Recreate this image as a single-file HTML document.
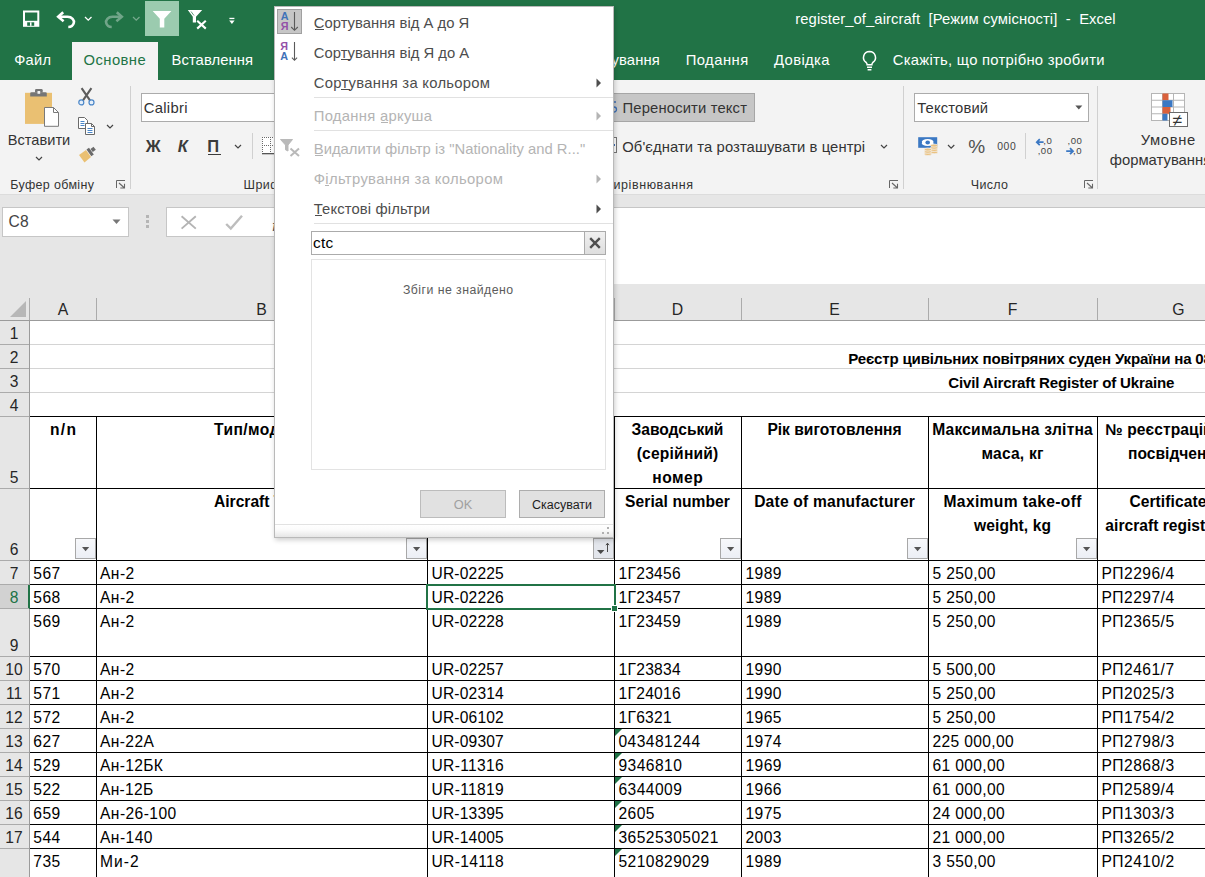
<!DOCTYPE html>
<html lang="uk"><head><meta charset="utf-8"><title>register_of_aircraft - Excel</title>
<style>
html,body{margin:0;padding:0;}
body{width:1205px;height:877px;overflow:hidden;position:relative;background:#e6e6e6;font-family:"Liberation Sans", sans-serif;}
#app{position:absolute;left:0;top:0;width:1205px;height:877px;overflow:hidden;}
#app div,#app svg,#app span.t{position:absolute;}
#app div{box-sizing:border-box;}
span.t{white-space:pre;}
</style></head><body><div id="app">
<div style="left:30px;top:321px;width:1175px;height:556px;background:#fff;"></div>
<div style="left:0px;top:195px;width:1205px;height:89px;background:#e6e6e6;"></div>
<div style="left:166px;top:207px;width:1039px;height:30px;background:#fff;border:1px solid #c6c6c6;border-right:none;"></div>
<div style="left:600px;top:207px;width:605px;height:78px;background:#fff;border-top:1px solid #c6c6c6;border-bottom:1px solid #c6c6c6;"></div>
<div style="left:2px;top:207px;width:127px;height:30px;background:#fff;border:1px solid #c6c6c6;"></div>
<span class="t" style="left:8.55px;top:212.40px;font-size:15.6px;line-height:20px;color:#444;letter-spacing:0.281px;">C8</span>
<svg style="left:112px;top:219px;" width="9" height="6" viewBox="0 0 9 6"><path d="M0.5 0.5h8l-4 4.5z" fill="#777"/></svg>
<div style="left:146px;top:215px;width:3px;height:3px;background:#b5b5b5;"></div>
<div style="left:146px;top:220px;width:3px;height:3px;background:#b5b5b5;"></div>
<div style="left:146px;top:225px;width:3px;height:3px;background:#b5b5b5;"></div>
<svg style="left:180px;top:215px;" width="17" height="16" viewBox="0 0 17 16"><path d="M1.6 1.2L15.8 13.6M15.8 1.2L1.6 13.6" stroke="#b4b4b4" stroke-width="1.9" fill="none"/></svg>
<svg style="left:225px;top:214px;" width="19" height="17" viewBox="0 0 19 17"><path d="M1.2 10L5.8 14.6L17 1.8" stroke="#bdbdbd" stroke-width="2.4" fill="none"/></svg>
<span class="t" style="left:272.20px;top:215.50px;font-size:15px;line-height:19px;color:#505050;font-style:italic;">fx</span>
<div style="left:0px;top:284px;width:1205px;height:37px;background:#e6e6e6;"></div>
<div style="left:0px;top:320px;width:1205px;height:1px;background:#9b9b9b;"></div>
<div style="left:0px;top:321px;width:30px;height:556px;background:#e6e6e6;"></div>
<div style="left:29px;top:321px;width:1px;height:556px;background:#9b9b9b;"></div>
<svg style="left:10px;top:301px;" width="16" height="16" viewBox="0 0 16 16"><path d="M16 0V16H0z" fill="#b7b7b7"/></svg>
<div style="left:29px;top:298px;width:1px;height:22px;background:#ababab;"></div>
<div style="left:96px;top:298px;width:1px;height:22px;background:#ababab;"></div>
<div style="left:427px;top:298px;width:1px;height:22px;background:#ababab;"></div>
<div style="left:614px;top:298px;width:1px;height:22px;background:#ababab;"></div>
<div style="left:741px;top:298px;width:1px;height:22px;background:#ababab;"></div>
<div style="left:928px;top:298px;width:1px;height:22px;background:#ababab;"></div>
<div style="left:1097px;top:298px;width:1px;height:22px;background:#ababab;"></div>
<span class="t" style="left:57.73px;top:299.70px;font-size:15.8px;line-height:20px;color:#262626;">A</span>
<span class="t" style="left:256.23px;top:299.70px;font-size:15.8px;line-height:20px;color:#262626;">B</span>
<span class="t" style="left:514.79px;top:299.70px;font-size:15.8px;line-height:20px;color:#262626;">C</span>
<span class="t" style="left:671.79px;top:299.70px;font-size:15.8px;line-height:20px;color:#262626;">D</span>
<span class="t" style="left:829.23px;top:299.70px;font-size:15.8px;line-height:20px;color:#262626;">E</span>
<span class="t" style="left:1007.67px;top:299.70px;font-size:15.8px;line-height:20px;color:#262626;">F</span>
<span class="t" style="left:1172.35px;top:299.70px;font-size:15.8px;line-height:20px;color:#262626;">G</span>
<div style="left:0px;top:585px;width:29px;height:24px;background:#d2d2d2;"></div>
<div style="left:28px;top:585px;width:2px;height:24px;background:#217346;"></div>
<div style="left:0px;top:344px;width:29px;height:1px;background:#ababab;"></div>
<span class="t" style="left:9.66px;top:323.90px;font-size:15.6px;line-height:20px;color:#262626;">1</span>
<div style="left:0px;top:368px;width:29px;height:1px;background:#ababab;"></div>
<span class="t" style="left:9.66px;top:347.90px;font-size:15.6px;line-height:20px;color:#262626;">2</span>
<div style="left:0px;top:392px;width:29px;height:1px;background:#ababab;"></div>
<span class="t" style="left:9.66px;top:371.90px;font-size:15.6px;line-height:20px;color:#262626;">3</span>
<div style="left:0px;top:416px;width:29px;height:1px;background:#ababab;"></div>
<span class="t" style="left:9.66px;top:395.90px;font-size:15.6px;line-height:20px;color:#262626;">4</span>
<div style="left:0px;top:488px;width:29px;height:1px;background:#ababab;"></div>
<span class="t" style="left:9.66px;top:467.90px;font-size:15.6px;line-height:20px;color:#262626;">5</span>
<div style="left:0px;top:560px;width:29px;height:1px;background:#ababab;"></div>
<span class="t" style="left:9.66px;top:539.90px;font-size:15.6px;line-height:20px;color:#262626;">6</span>
<div style="left:0px;top:584px;width:29px;height:1px;background:#ababab;"></div>
<span class="t" style="left:9.66px;top:563.90px;font-size:15.6px;line-height:20px;color:#262626;">7</span>
<div style="left:0px;top:608px;width:29px;height:1px;background:#ababab;"></div>
<span class="t" style="left:9.66px;top:587.90px;font-size:15.6px;line-height:20px;color:#217346;">8</span>
<div style="left:0px;top:656px;width:29px;height:1px;background:#ababab;"></div>
<span class="t" style="left:9.66px;top:635.90px;font-size:15.6px;line-height:20px;color:#262626;">9</span>
<div style="left:0px;top:680px;width:29px;height:1px;background:#ababab;"></div>
<span class="t" style="left:5.32px;top:659.90px;font-size:15.6px;line-height:20px;color:#262626;">10</span>
<div style="left:0px;top:704px;width:29px;height:1px;background:#ababab;"></div>
<span class="t" style="left:5.91px;top:683.90px;font-size:15.6px;line-height:20px;color:#262626;">11</span>
<div style="left:0px;top:728px;width:29px;height:1px;background:#ababab;"></div>
<span class="t" style="left:5.32px;top:707.90px;font-size:15.6px;line-height:20px;color:#262626;">12</span>
<div style="left:0px;top:752px;width:29px;height:1px;background:#ababab;"></div>
<span class="t" style="left:5.32px;top:731.90px;font-size:15.6px;line-height:20px;color:#262626;">13</span>
<div style="left:0px;top:776px;width:29px;height:1px;background:#ababab;"></div>
<span class="t" style="left:5.32px;top:755.90px;font-size:15.6px;line-height:20px;color:#262626;">14</span>
<div style="left:0px;top:800px;width:29px;height:1px;background:#ababab;"></div>
<span class="t" style="left:5.32px;top:779.90px;font-size:15.6px;line-height:20px;color:#262626;">15</span>
<div style="left:0px;top:824px;width:29px;height:1px;background:#ababab;"></div>
<span class="t" style="left:5.32px;top:803.90px;font-size:15.6px;line-height:20px;color:#262626;">16</span>
<div style="left:0px;top:848px;width:29px;height:1px;background:#ababab;"></div>
<span class="t" style="left:5.32px;top:827.90px;font-size:15.6px;line-height:20px;color:#262626;">17</span>
<div style="left:0px;top:896px;width:29px;height:1px;background:#ababab;"></div>
<div style="left:30px;top:344px;width:1175px;height:1px;background:#d4d4d4;"></div>
<div style="left:30px;top:368px;width:1175px;height:1px;background:#d4d4d4;"></div>
<div style="left:30px;top:392px;width:1175px;height:1px;background:#d4d4d4;"></div>
<div style="left:30px;top:416px;width:1175px;height:1px;background:#000;"></div>
<div style="left:30px;top:488px;width:1175px;height:1px;background:#000;"></div>
<div style="left:30px;top:560px;width:1175px;height:1px;background:#000;"></div>
<div style="left:30px;top:584px;width:1175px;height:1px;background:#000;"></div>
<div style="left:30px;top:608px;width:1175px;height:1px;background:#000;"></div>
<div style="left:30px;top:656px;width:1175px;height:1px;background:#000;"></div>
<div style="left:30px;top:680px;width:1175px;height:1px;background:#000;"></div>
<div style="left:30px;top:704px;width:1175px;height:1px;background:#000;"></div>
<div style="left:30px;top:728px;width:1175px;height:1px;background:#000;"></div>
<div style="left:30px;top:752px;width:1175px;height:1px;background:#000;"></div>
<div style="left:30px;top:776px;width:1175px;height:1px;background:#000;"></div>
<div style="left:30px;top:800px;width:1175px;height:1px;background:#000;"></div>
<div style="left:30px;top:824px;width:1175px;height:1px;background:#000;"></div>
<div style="left:30px;top:848px;width:1175px;height:1px;background:#000;"></div>
<div style="left:30px;top:896px;width:1175px;height:1px;background:#000;"></div>
<div style="left:96px;top:416px;width:1px;height:461px;background:#000;"></div>
<div style="left:427px;top:416px;width:1px;height:461px;background:#000;"></div>
<div style="left:614px;top:416px;width:1px;height:461px;background:#000;"></div>
<div style="left:741px;top:416px;width:1px;height:461px;background:#000;"></div>
<div style="left:928px;top:416px;width:1px;height:461px;background:#000;"></div>
<div style="left:1097px;top:416px;width:1px;height:461px;background:#000;"></div>
<span class="t" style="left:848.25px;top:348.50px;font-size:15.1px;line-height:19px;color:#000;font-weight:700;letter-spacing:-0.192px;">Реєстр цивільних повітряних суден України на 08</span>
<span class="t" style="left:948.25px;top:372.50px;font-size:15.1px;line-height:19px;color:#000;font-weight:700;letter-spacing:-0.17px;">Civil Aircraft Register of Ukraine</span>
<span class="t" style="left:50.08px;top:419.50px;font-size:15.6px;line-height:20px;color:#000;font-weight:700;letter-spacing:1.221px;">n/n</span>
<span class="t" style="left:214.06px;top:419.50px;font-size:15.6px;line-height:20px;color:#000;font-weight:700;letter-spacing:0.433px;">Тип/модель</span>
<span class="t" style="left:214.04px;top:491.50px;font-size:15.6px;line-height:20px;color:#000;font-weight:700;letter-spacing:-0.011px;">Aircraft Type</span>
<span class="t" style="left:631.58px;top:419.50px;font-size:15.6px;line-height:20px;color:#000;font-weight:700;letter-spacing:-0.026px;">Заводський</span>
<span class="t" style="left:636.71px;top:443.50px;font-size:15.6px;line-height:20px;color:#000;font-weight:700;letter-spacing:0.199px;">(серійний)</span>
<span class="t" style="left:652.23px;top:467.50px;font-size:15.6px;line-height:20px;color:#000;font-weight:700;letter-spacing:0.514px;">номер</span>
<span class="t" style="left:767.38px;top:419.50px;font-size:15.6px;line-height:20px;color:#000;font-weight:700;letter-spacing:0.008px;">Рік виготовлення</span>
<span class="t" style="left:932.20px;top:419.50px;font-size:15.6px;line-height:20px;color:#000;font-weight:700;letter-spacing:0.203px;">Максимальна злітна</span>
<span class="t" style="left:981.53px;top:443.50px;font-size:15.6px;line-height:20px;color:#000;font-weight:700;letter-spacing:0.203px;">маса, кг</span>
<span class="t" style="left:1105.27px;top:419.50px;font-size:15.6px;line-height:20px;color:#000;font-weight:700;letter-spacing:0.077px;">№ реєстраційного</span>
<span class="t" style="left:1128.02px;top:443.50px;font-size:15.6px;line-height:20px;color:#000;font-weight:700;letter-spacing:0.006px;">посвідчення</span>
<span class="t" style="left:625.11px;top:491.50px;font-size:15.6px;line-height:20px;color:#000;font-weight:700;letter-spacing:0.065px;">Serial number</span>
<span class="t" style="left:754.16px;top:491.50px;font-size:15.6px;line-height:20px;color:#000;font-weight:700;letter-spacing:0.202px;">Date of manufacturer</span>
<span class="t" style="left:943.53px;top:491.50px;font-size:15.6px;line-height:20px;color:#000;font-weight:700;letter-spacing:0.358px;">Maximum take-off</span>
<span class="t" style="left:974.08px;top:515.50px;font-size:15.6px;line-height:20px;color:#000;font-weight:700;letter-spacing:0.065px;">weight, kg</span>
<span class="t" style="left:1129.45px;top:491.50px;font-size:15.6px;line-height:20px;color:#000;font-weight:700;letter-spacing:0.06px;">Certificate of</span>
<span class="t" style="left:1105.35px;top:515.50px;font-size:15.6px;line-height:20px;color:#000;font-weight:700;letter-spacing:0.015px;">aircraft registration</span>
<div style="left:75px;top:538px;width:21px;height:21px;background:linear-gradient(#f7f8fb,#eceff5);border:1px solid #a8a8a8;"></div>
<svg style="left:75px;top:538px;" width="21" height="21" viewBox="0 0 21 21"><path d="M7 9h7.2l-3.6 4.2z" fill="#555"/></svg>
<div style="left:406px;top:538px;width:21px;height:21px;background:linear-gradient(#f7f8fb,#eceff5);border:1px solid #a8a8a8;"></div>
<svg style="left:406px;top:538px;" width="21" height="21" viewBox="0 0 21 21"><path d="M7 9h7.2l-3.6 4.2z" fill="#555"/></svg>
<div style="left:720px;top:538px;width:21px;height:21px;background:linear-gradient(#f7f8fb,#eceff5);border:1px solid #a8a8a8;"></div>
<svg style="left:720px;top:538px;" width="21" height="21" viewBox="0 0 21 21"><path d="M7 9h7.2l-3.6 4.2z" fill="#555"/></svg>
<div style="left:907px;top:538px;width:21px;height:21px;background:linear-gradient(#f7f8fb,#eceff5);border:1px solid #a8a8a8;"></div>
<svg style="left:907px;top:538px;" width="21" height="21" viewBox="0 0 21 21"><path d="M7 9h7.2l-3.6 4.2z" fill="#555"/></svg>
<div style="left:1076px;top:538px;width:21px;height:21px;background:linear-gradient(#f7f8fb,#eceff5);border:1px solid #a8a8a8;"></div>
<svg style="left:1076px;top:538px;" width="21" height="21" viewBox="0 0 21 21"><path d="M7 9h7.2l-3.6 4.2z" fill="#555"/></svg>
<div style="left:593px;top:538px;width:21px;height:21px;background:#e3e6ec;border:1px solid #a8a8a8;"></div>
<svg style="left:593px;top:538px;" width="21" height="21" viewBox="0 0 21 21"><path d="M4 12h7.4l-3.7 4z" fill="#4a4a4a"/><path d="M14.5 14V5.2M12.9 7.2l1.6-2l1.6 2" stroke="#4a4a4a" stroke-width="1" fill="none"/></svg>
<span class="t" style="left:33.30px;top:563.60px;font-size:15.6px;line-height:20px;color:#000;letter-spacing:0.446px;">567</span>
<span class="t" style="left:100.00px;top:563.60px;font-size:15.6px;line-height:20px;color:#000;letter-spacing:0.446px;">Ан-2</span>
<span class="t" style="left:431.50px;top:563.60px;font-size:15.6px;line-height:20px;color:#000;letter-spacing:0.171px;">UR-02225</span>
<span class="t" style="left:618.50px;top:563.60px;font-size:15.6px;line-height:20px;color:#000;letter-spacing:0.284px;">1Г23456</span>
<span class="t" style="left:745.50px;top:563.60px;font-size:15.6px;line-height:20px;color:#000;letter-spacing:0.448px;">1989</span>
<span class="t" style="left:932.50px;top:563.60px;font-size:15.6px;line-height:20px;color:#000;letter-spacing:0.325px;">5 250,00</span>
<span class="t" style="left:1101.50px;top:563.60px;font-size:15.6px;line-height:20px;color:#000;letter-spacing:0.468px;">РП2296/4</span>
<span class="t" style="left:33.30px;top:587.60px;font-size:15.6px;line-height:20px;color:#000;letter-spacing:0.446px;">568</span>
<span class="t" style="left:100.00px;top:587.60px;font-size:15.6px;line-height:20px;color:#000;letter-spacing:0.446px;">Ан-2</span>
<span class="t" style="left:431.50px;top:587.60px;font-size:15.6px;line-height:20px;color:#000;letter-spacing:0.171px;">UR-02226</span>
<span class="t" style="left:618.50px;top:587.60px;font-size:15.6px;line-height:20px;color:#000;letter-spacing:0.284px;">1Г23457</span>
<span class="t" style="left:745.50px;top:587.60px;font-size:15.6px;line-height:20px;color:#000;letter-spacing:0.448px;">1989</span>
<span class="t" style="left:932.50px;top:587.60px;font-size:15.6px;line-height:20px;color:#000;letter-spacing:0.325px;">5 250,00</span>
<span class="t" style="left:1101.50px;top:587.60px;font-size:15.6px;line-height:20px;color:#000;letter-spacing:0.468px;">РП2297/4</span>
<span class="t" style="left:33.30px;top:611.60px;font-size:15.6px;line-height:20px;color:#000;letter-spacing:0.446px;">569</span>
<span class="t" style="left:100.00px;top:611.60px;font-size:15.6px;line-height:20px;color:#000;letter-spacing:0.446px;">Ан-2</span>
<span class="t" style="left:431.50px;top:611.60px;font-size:15.6px;line-height:20px;color:#000;letter-spacing:0.171px;">UR-02228</span>
<span class="t" style="left:618.50px;top:611.60px;font-size:15.6px;line-height:20px;color:#000;letter-spacing:0.284px;">1Г23459</span>
<span class="t" style="left:745.50px;top:611.60px;font-size:15.6px;line-height:20px;color:#000;letter-spacing:0.448px;">1989</span>
<span class="t" style="left:932.50px;top:611.60px;font-size:15.6px;line-height:20px;color:#000;letter-spacing:0.325px;">5 250,00</span>
<span class="t" style="left:1101.50px;top:611.60px;font-size:15.6px;line-height:20px;color:#000;letter-spacing:0.468px;">РП2365/5</span>
<span class="t" style="left:33.30px;top:659.60px;font-size:15.6px;line-height:20px;color:#000;letter-spacing:0.446px;">570</span>
<span class="t" style="left:100.00px;top:659.60px;font-size:15.6px;line-height:20px;color:#000;letter-spacing:0.446px;">Ан-2</span>
<span class="t" style="left:431.50px;top:659.60px;font-size:15.6px;line-height:20px;color:#000;letter-spacing:0.171px;">UR-02257</span>
<span class="t" style="left:618.50px;top:659.60px;font-size:15.6px;line-height:20px;color:#000;letter-spacing:0.284px;">1Г23834</span>
<span class="t" style="left:745.50px;top:659.60px;font-size:15.6px;line-height:20px;color:#000;letter-spacing:0.448px;">1990</span>
<span class="t" style="left:932.50px;top:659.60px;font-size:15.6px;line-height:20px;color:#000;letter-spacing:0.325px;">5 500,00</span>
<span class="t" style="left:1101.50px;top:659.60px;font-size:15.6px;line-height:20px;color:#000;letter-spacing:0.468px;">РП2461/7</span>
<span class="t" style="left:33.30px;top:683.60px;font-size:15.6px;line-height:20px;color:#000;letter-spacing:0.446px;">571</span>
<span class="t" style="left:100.00px;top:683.60px;font-size:15.6px;line-height:20px;color:#000;letter-spacing:0.446px;">Ан-2</span>
<span class="t" style="left:431.50px;top:683.60px;font-size:15.6px;line-height:20px;color:#000;letter-spacing:0.171px;">UR-02314</span>
<span class="t" style="left:618.50px;top:683.60px;font-size:15.6px;line-height:20px;color:#000;letter-spacing:0.284px;">1Г24016</span>
<span class="t" style="left:745.50px;top:683.60px;font-size:15.6px;line-height:20px;color:#000;letter-spacing:0.448px;">1990</span>
<span class="t" style="left:932.50px;top:683.60px;font-size:15.6px;line-height:20px;color:#000;letter-spacing:0.325px;">5 250,00</span>
<span class="t" style="left:1101.50px;top:683.60px;font-size:15.6px;line-height:20px;color:#000;letter-spacing:0.468px;">РП2025/3</span>
<span class="t" style="left:33.30px;top:707.60px;font-size:15.6px;line-height:20px;color:#000;letter-spacing:0.446px;">572</span>
<span class="t" style="left:100.00px;top:707.60px;font-size:15.6px;line-height:20px;color:#000;letter-spacing:0.446px;">Ан-2</span>
<span class="t" style="left:431.50px;top:707.60px;font-size:15.6px;line-height:20px;color:#000;letter-spacing:0.171px;">UR-06102</span>
<span class="t" style="left:618.50px;top:707.60px;font-size:15.6px;line-height:20px;color:#000;letter-spacing:0.257px;">1Г6321</span>
<span class="t" style="left:745.50px;top:707.60px;font-size:15.6px;line-height:20px;color:#000;letter-spacing:0.448px;">1965</span>
<span class="t" style="left:932.50px;top:707.60px;font-size:15.6px;line-height:20px;color:#000;letter-spacing:0.325px;">5 250,00</span>
<span class="t" style="left:1101.50px;top:707.60px;font-size:15.6px;line-height:20px;color:#000;letter-spacing:0.468px;">РП1754/2</span>
<span class="t" style="left:33.30px;top:731.60px;font-size:15.6px;line-height:20px;color:#000;letter-spacing:0.446px;">627</span>
<span class="t" style="left:100.00px;top:731.60px;font-size:15.6px;line-height:20px;color:#000;letter-spacing:0.377px;">Ан-22А</span>
<span class="t" style="left:431.50px;top:731.60px;font-size:15.6px;line-height:20px;color:#000;letter-spacing:0.171px;">UR-09307</span>
<span class="t" style="left:618.50px;top:731.60px;font-size:15.6px;line-height:20px;color:#000;letter-spacing:0.45px;">043481244</span>
<span class="t" style="left:745.50px;top:731.60px;font-size:15.6px;line-height:20px;color:#000;letter-spacing:0.448px;">1974</span>
<span class="t" style="left:932.50px;top:731.60px;font-size:15.6px;line-height:20px;color:#000;letter-spacing:0.35px;">225 000,00</span>
<span class="t" style="left:1101.50px;top:731.60px;font-size:15.6px;line-height:20px;color:#000;letter-spacing:0.468px;">РП2798/3</span>
<svg style="left:615px;top:729px;" width="8" height="8" viewBox="0 0 8 8"><path d="M0 0H7L0 7z" fill="#1e7145"/></svg>
<span class="t" style="left:33.30px;top:755.60px;font-size:15.6px;line-height:20px;color:#000;letter-spacing:0.446px;">529</span>
<span class="t" style="left:100.00px;top:755.60px;font-size:15.6px;line-height:20px;color:#000;letter-spacing:0.339px;">Ан-12БК</span>
<span class="t" style="left:431.50px;top:755.60px;font-size:15.6px;line-height:20px;color:#000;letter-spacing:0.316px;">UR-11316</span>
<span class="t" style="left:618.50px;top:755.60px;font-size:15.6px;line-height:20px;color:#000;letter-spacing:0.449px;">9346810</span>
<span class="t" style="left:745.50px;top:755.60px;font-size:15.6px;line-height:20px;color:#000;letter-spacing:0.448px;">1969</span>
<span class="t" style="left:932.50px;top:755.60px;font-size:15.6px;line-height:20px;color:#000;letter-spacing:0.339px;">61 000,00</span>
<span class="t" style="left:1101.50px;top:755.60px;font-size:15.6px;line-height:20px;color:#000;letter-spacing:0.468px;">РП2868/3</span>
<svg style="left:615px;top:753px;" width="8" height="8" viewBox="0 0 8 8"><path d="M0 0H7L0 7z" fill="#1e7145"/></svg>
<span class="t" style="left:33.30px;top:779.60px;font-size:15.6px;line-height:20px;color:#000;letter-spacing:0.446px;">522</span>
<span class="t" style="left:100.00px;top:779.60px;font-size:15.6px;line-height:20px;color:#000;letter-spacing:0.279px;">Ан-12Б</span>
<span class="t" style="left:431.50px;top:779.60px;font-size:15.6px;line-height:20px;color:#000;letter-spacing:0.316px;">UR-11819</span>
<span class="t" style="left:618.50px;top:779.60px;font-size:15.6px;line-height:20px;color:#000;letter-spacing:0.449px;">6344009</span>
<span class="t" style="left:745.50px;top:779.60px;font-size:15.6px;line-height:20px;color:#000;letter-spacing:0.448px;">1966</span>
<span class="t" style="left:932.50px;top:779.60px;font-size:15.6px;line-height:20px;color:#000;letter-spacing:0.339px;">61 000,00</span>
<span class="t" style="left:1101.50px;top:779.60px;font-size:15.6px;line-height:20px;color:#000;letter-spacing:0.468px;">РП2589/4</span>
<svg style="left:615px;top:777px;" width="8" height="8" viewBox="0 0 8 8"><path d="M0 0H7L0 7z" fill="#1e7145"/></svg>
<span class="t" style="left:33.30px;top:803.60px;font-size:15.6px;line-height:20px;color:#000;letter-spacing:0.446px;">659</span>
<span class="t" style="left:100.00px;top:803.60px;font-size:15.6px;line-height:20px;color:#000;letter-spacing:0.435px;">Ан-26-100</span>
<span class="t" style="left:431.50px;top:803.60px;font-size:15.6px;line-height:20px;color:#000;letter-spacing:0.171px;">UR-13395</span>
<span class="t" style="left:618.50px;top:803.60px;font-size:15.6px;line-height:20px;color:#000;letter-spacing:0.448px;">2605</span>
<span class="t" style="left:745.50px;top:803.60px;font-size:15.6px;line-height:20px;color:#000;letter-spacing:0.448px;">1975</span>
<span class="t" style="left:932.50px;top:803.60px;font-size:15.6px;line-height:20px;color:#000;letter-spacing:0.339px;">24 000,00</span>
<span class="t" style="left:1101.50px;top:803.60px;font-size:15.6px;line-height:20px;color:#000;letter-spacing:0.468px;">РП1303/3</span>
<svg style="left:615px;top:801px;" width="8" height="8" viewBox="0 0 8 8"><path d="M0 0H7L0 7z" fill="#1e7145"/></svg>
<span class="t" style="left:33.30px;top:827.60px;font-size:15.6px;line-height:20px;color:#000;letter-spacing:0.446px;">544</span>
<span class="t" style="left:100.00px;top:827.60px;font-size:15.6px;line-height:20px;color:#000;letter-spacing:0.448px;">Ан-140</span>
<span class="t" style="left:431.50px;top:827.60px;font-size:15.6px;line-height:20px;color:#000;letter-spacing:0.171px;">UR-14005</span>
<span class="t" style="left:618.50px;top:827.60px;font-size:15.6px;line-height:20px;color:#000;letter-spacing:0.45px;">36525305021</span>
<span class="t" style="left:745.50px;top:827.60px;font-size:15.6px;line-height:20px;color:#000;letter-spacing:0.448px;">2003</span>
<span class="t" style="left:932.50px;top:827.60px;font-size:15.6px;line-height:20px;color:#000;letter-spacing:0.339px;">21 000,00</span>
<span class="t" style="left:1101.50px;top:827.60px;font-size:15.6px;line-height:20px;color:#000;letter-spacing:0.468px;">РП3265/2</span>
<svg style="left:615px;top:825px;" width="8" height="8" viewBox="0 0 8 8"><path d="M0 0H7L0 7z" fill="#1e7145"/></svg>
<span class="t" style="left:33.30px;top:851.60px;font-size:15.6px;line-height:20px;color:#000;letter-spacing:0.446px;">735</span>
<span class="t" style="left:100.00px;top:851.60px;font-size:15.6px;line-height:20px;color:#000;letter-spacing:1.044px;">Ми-2</span>
<span class="t" style="left:431.50px;top:851.60px;font-size:15.6px;line-height:20px;color:#000;letter-spacing:0.316px;">UR-14118</span>
<span class="t" style="left:618.50px;top:851.60px;font-size:15.6px;line-height:20px;color:#000;letter-spacing:0.45px;">5210829029</span>
<span class="t" style="left:745.50px;top:851.60px;font-size:15.6px;line-height:20px;color:#000;letter-spacing:0.448px;">1989</span>
<span class="t" style="left:932.50px;top:851.60px;font-size:15.6px;line-height:20px;color:#000;letter-spacing:0.325px;">3 550,00</span>
<span class="t" style="left:1101.50px;top:851.60px;font-size:15.6px;line-height:20px;color:#000;letter-spacing:0.468px;">РП2410/2</span>
<svg style="left:615px;top:849px;" width="8" height="8" viewBox="0 0 8 8"><path d="M0 0H7L0 7z" fill="#1e7145"/></svg>
<div style="left:426px;top:584px;width:190px;height:26px;background:transparent;border:2px solid #217346;"></div>
<div style="left:611px;top:605px;width:7px;height:7px;background:#217346;border:1px solid #fff;"></div>
<div style="left:0px;top:0px;width:1205px;height:80px;background:#217346;"></div>
<div style="left:0px;top:80px;width:1205px;height:115px;background:#f3f3f3;"></div>
<div style="left:0px;top:194px;width:1205px;height:1px;background:#dcdcdc;"></div>
<div style="left:72px;top:42px;width:86px;height:38px;background:#f3f3f3;"></div>
<svg style="left:23px;top:10px;" width="17" height="17" viewBox="0 0 17 17"><rect x="0" y="0.5" width="16.3" height="16.3" fill="#fff"/><rect x="2" y="2.5" width="12.3" height="8.3" fill="#217346"/><rect x="4.2" y="12.3" width="7" height="3.5" fill="#217346"/><rect x="7" y="12.3" width="1.5" height="3.5" fill="#fff"/></svg>
<svg style="left:56px;top:10px;" width="21" height="19" viewBox="0 0 21 19"><path d="M2.2 6.8H11.5C16 6.8 18.6 10 17.8 13C17.1 15.6 15 17 12.3 17" stroke="#fff" stroke-width="2.6" fill="none"/><path d="M7.2 2.2L2.2 6.8L7.6 11.2" stroke="#fff" stroke-width="2.6" fill="none"/></svg>
<svg style="left:84px;top:16px;" width="8.5" height="6.2" viewBox="0 0 8.5 6.2"><path d="M1 1L4.25 4.2L7.5 1" stroke="#fff" stroke-width="1.3" fill="none"/></svg>
<svg style="left:103px;top:10px;" width="21" height="19" viewBox="0 0 21 19"><g opacity="0.36"><path d="M18.8 6.8H9.5C5 6.8 2.4 10 3.2 13C3.9 15.6 6 17 8.7 17" stroke="#fff" stroke-width="2.6" fill="none"/><path d="M13.8 2.2L18.8 6.8L13.4 11.2" stroke="#fff" stroke-width="2.6" fill="none"/></g></svg>
<svg style="left:132px;top:16px;" width="8.5" height="6.2" viewBox="0 0 8.5 6.2"><path d="M1 1L4.25 4.2L7.5 1" stroke="rgba(255,255,255,0.38)" stroke-width="1.3" fill="none"/></svg>
<div style="left:145px;top:1px;width:34px;height:35px;background:#9bcbaf;"></div>
<svg style="left:152px;top:11px;" width="20" height="17" viewBox="0 0 20 17"><path d="M0.7 0H19.4L12.3 7.8V16.5H7.8V7.8z" fill="#fff"/></svg>
<svg style="left:186px;top:9px;" width="23" height="21" viewBox="0 0 23 21"><path d="M1.8 1H16.2L10 7.8V13.6H6.8V7.8z" fill="#fff"/><path d="M5 2.5L8 6.5" stroke="#217346" stroke-width="0.7"/><path d="M11.2 11.8L19.8 19.6M19.8 11.8L11.2 19.6" stroke="#fff" stroke-width="2.1"/></svg>
<svg style="left:229px;top:17px;" width="8" height="8" viewBox="0 0 8 8"><rect x="0.4" y="0.8" width="5" height="1.3" fill="#fff"/><path d="M0.2 3.6H5.6L2.9 6.9z" fill="#fff"/></svg>
<span class="t" style="left:795.25px;top:10.00px;font-size:14.8px;line-height:18px;color:#fff;letter-spacing:0.081px;">register_of_aircraft  [Режим сумісності]  -  Excel</span>
<span class="t" style="left:14.25px;top:51.30px;font-size:14.6px;line-height:18px;color:#fff;letter-spacing:0.277px;">Файл</span>
<span class="t" style="left:83.55px;top:51.30px;font-size:14.8px;line-height:18px;color:#217346;letter-spacing:0.417px;">Основне</span>
<span class="t" style="left:171.55px;top:51.30px;font-size:14.8px;line-height:18px;color:#fff;letter-spacing:0.064px;">Вставлення</span>
<span class="t" style="left:573.25px;top:51.30px;font-size:14.8px;line-height:18px;color:#fff;letter-spacing:0.077px;">Формування</span>
<span class="t" style="left:685.65px;top:51.30px;font-size:14.8px;line-height:18px;color:#fff;letter-spacing:0.462px;">Подання</span>
<span class="t" style="left:773.95px;top:51.30px;font-size:14.8px;line-height:18px;color:#fff;letter-spacing:0.395px;">Довідка</span>
<span class="t" style="left:892.75px;top:51.30px;font-size:14.8px;line-height:18px;color:#fff;letter-spacing:0.279px;">Скажіть, що потрібно зробити</span>
<svg style="left:861px;top:50px;" width="17" height="22" viewBox="0 0 17 22"><path d="M8.5 1.5a6 6 0 0 0 -3.3 11c0.6 0.6 0.9 1.4 0.9 2.3h4.8c0-0.9 0.3-1.7 0.9-2.3a6 6 0 0 0 -3.3-11z" fill="none" stroke="#fff" stroke-width="1.5"/><path d="M6 17.3h5M6.6 19.8h3.8" stroke="#fff" stroke-width="1.4"/></svg>
<svg style="left:24px;top:88px;" width="37" height="40" viewBox="0 0 37 40"><rect x="1" y="4.8" width="27" height="31.1" fill="#eac072"/><path d="M6.2 8.4V5.6Q6.2 4.3 7.5 4.3H21.5Q22.8 4.3 22.8 5.6V8.4z" fill="#767676"/><path d="M11 4.5V2.2Q11 1 12.2 1H17.5Q18.7 1 18.7 2.2V4.5z" fill="#767676"/><rect x="13.5" y="3" width="2.7" height="2.8" fill="#f3f3f3"/><path d="M20.5 19.5H29.5L34.5 24.5V38.3H20.5z" fill="#fff" stroke="#7a7a7a" stroke-width="1"/><path d="M29.5 19.5V24.5H34.5" fill="none" stroke="#7a7a7a" stroke-width="1"/></svg>
<span class="t" style="left:7.75px;top:130.50px;font-size:14.6px;line-height:18px;color:#333333;letter-spacing:0.01px;">Вставити</span>
<svg style="left:35px;top:156px;" width="8" height="6" viewBox="0 0 8 6"><path d="M1 1L4.0 4L7 1" stroke="#444" stroke-width="1.2" fill="none"/></svg>
<svg style="left:77px;top:87px;" width="19" height="20" viewBox="0 0 19 20"><path d="M4.6 1.2L13 13.4M14.4 1.2L6 13.4" stroke="#5c5c5c" stroke-width="2.1" fill="none"/><circle cx="4.3" cy="15.4" r="2.5" fill="#e4eef9" stroke="#4a86c8" stroke-width="1.2"/><circle cx="14.5" cy="15.4" r="2.5" fill="#e4eef9" stroke="#4a86c8" stroke-width="1.2"/></svg>
<svg style="left:77px;top:116px;" width="19" height="20" viewBox="0 0 19 20"><path d="M1.5 1.5H7.5L10.5 4.5V12.5H1.5z" fill="#fff" stroke="#6a6a6a"/><path d="M3.5 5.5h4M3.5 7.5h4M3.5 9.5h4" stroke="#4a86c8" stroke-width="1"/><path d="M8.5 7.5H14.5L17.5 10.5V18.5H8.5z" fill="#fff" stroke="#6a6a6a"/><path d="M14.5 7.5V10.5H17.5" fill="none" stroke="#6a6a6a"/><path d="M10.5 12.5h5M10.5 14.5h5M10.5 16.5h5" stroke="#4a86c8" stroke-width="1"/></svg>
<svg style="left:106px;top:124px;" width="8" height="6" viewBox="0 0 8 6"><path d="M1 1L4.0 4L7 1" stroke="#444" stroke-width="1.2" fill="none"/></svg>
<svg style="left:78px;top:146px;" width="19" height="18" viewBox="0 0 19 18"><path d="M1 9L8 4L13 11L6.5 16.5z" fill="#eac072"/><path d="M8.5 3.5L11 1.8L15.8 8.5L13.3 10.3z" fill="#6a6a6a"/><path d="M12.5 3L15.5 0.8L17.8 3.8L14.8 6z" fill="#6a6a6a"/></svg>
<span class="t" style="left:10.25px;top:176.60px;font-size:12.5px;line-height:16px;color:#333333;letter-spacing:0.328px;">Буфер обміну</span>
<svg style="left:116px;top:180px;" width="10" height="9" viewBox="0 0 10 9"><path d="M0.5 8V0.5H9" stroke="#666" stroke-width="1" fill="none"/><path d="M3 3L8.5 8M8.5 3.8V8H4.3" stroke="#666" stroke-width="1.1" fill="none"/></svg>
<div style="left:130px;top:86px;width:1px;height:103px;background:#d0d0d0;"></div>
<div style="left:141px;top:93px;width:150px;height:29px;background:#fff;border:1px solid #ababab;"></div>
<span class="t" style="left:143.75px;top:98.80px;font-size:14.8px;line-height:18px;color:#333333;letter-spacing:0.295px;">Calibri</span>
<span class="t" style="left:145.75px;top:135.90px;font-size:16.5px;line-height:21px;color:#3b3b3b;font-weight:700;letter-spacing:3.578px;">Ж</span>
<span class="t" style="left:177.75px;top:135.90px;font-size:16.5px;line-height:21px;color:#3b3b3b;font-weight:700;font-style:italic;letter-spacing:3.344px;">К</span>
<span class="t" style="left:207.25px;top:135.90px;font-size:16.5px;line-height:21px;color:#3b3b3b;font-weight:700;letter-spacing:2.141px;">П</span>
<div style="left:208px;top:153.5px;width:13px;height:1.2px;background:#3b3b3b;"></div>
<svg style="left:234px;top:144px;" width="8" height="6" viewBox="0 0 8 6"><path d="M1 1L4.0 4L7 1" stroke="#444" stroke-width="1.2" fill="none"/></svg>
<div style="left:252px;top:133px;width:1px;height:26px;background:#d0d0d0;"></div>
<svg style="left:262px;top:137px;" width="18" height="18" viewBox="0 0 18 18"><rect x="0" y="0" width="17" height="16" fill="#fff"/><rect x="0" y="0" width="1" height="1" fill="#6a6a6a"/><rect x="0" y="8" width="1" height="1" fill="#6a6a6a"/><rect x="2" y="0" width="1" height="1" fill="#6a6a6a"/><rect x="2" y="8" width="1" height="1" fill="#6a6a6a"/><rect x="4" y="0" width="1" height="1" fill="#6a6a6a"/><rect x="4" y="8" width="1" height="1" fill="#6a6a6a"/><rect x="6" y="0" width="1" height="1" fill="#6a6a6a"/><rect x="6" y="8" width="1" height="1" fill="#6a6a6a"/><rect x="8" y="0" width="1" height="1" fill="#6a6a6a"/><rect x="8" y="8" width="1" height="1" fill="#6a6a6a"/><rect x="10" y="0" width="1" height="1" fill="#6a6a6a"/><rect x="10" y="8" width="1" height="1" fill="#6a6a6a"/><rect x="12" y="0" width="1" height="1" fill="#6a6a6a"/><rect x="12" y="8" width="1" height="1" fill="#6a6a6a"/><rect x="14" y="0" width="1" height="1" fill="#6a6a6a"/><rect x="14" y="8" width="1" height="1" fill="#6a6a6a"/><rect x="16" y="0" width="1" height="1" fill="#6a6a6a"/><rect x="16" y="8" width="1" height="1" fill="#6a6a6a"/><rect x="0" y="2" width="1" height="1" fill="#6a6a6a"/><rect x="8" y="2" width="1" height="1" fill="#6a6a6a"/><rect x="16" y="2" width="1" height="1" fill="#6a6a6a"/><rect x="0" y="4" width="1" height="1" fill="#6a6a6a"/><rect x="8" y="4" width="1" height="1" fill="#6a6a6a"/><rect x="16" y="4" width="1" height="1" fill="#6a6a6a"/><rect x="0" y="6" width="1" height="1" fill="#6a6a6a"/><rect x="8" y="6" width="1" height="1" fill="#6a6a6a"/><rect x="16" y="6" width="1" height="1" fill="#6a6a6a"/><rect x="0" y="8" width="1" height="1" fill="#6a6a6a"/><rect x="8" y="8" width="1" height="1" fill="#6a6a6a"/><rect x="16" y="8" width="1" height="1" fill="#6a6a6a"/><rect x="0" y="10" width="1" height="1" fill="#6a6a6a"/><rect x="8" y="10" width="1" height="1" fill="#6a6a6a"/><rect x="16" y="10" width="1" height="1" fill="#6a6a6a"/><rect x="0" y="12" width="1" height="1" fill="#6a6a6a"/><rect x="8" y="12" width="1" height="1" fill="#6a6a6a"/><rect x="16" y="12" width="1" height="1" fill="#6a6a6a"/><rect x="0" y="14" width="1" height="1" fill="#6a6a6a"/><rect x="8" y="14" width="1" height="1" fill="#6a6a6a"/><rect x="16" y="14" width="1" height="1" fill="#6a6a6a"/><rect x="0" y="16" width="17" height="1.3" fill="#555"/></svg>
<span class="t" style="left:243.50px;top:176.60px;font-size:12.5px;line-height:16px;color:#333333;letter-spacing:0.45px;">Шрифт</span>
<div style="left:600px;top:93px;width:155px;height:29px;background:#c6c6c6;border:1px solid #a6a6a6;"></div>
<svg style="left:603px;top:99px;" width="16" height="16" viewBox="0 0 16 16"><path d="M2 3H13M2 8H11a2.5 2.5 0 0 1 0 5H8" stroke="#3c6eb4" stroke-width="1.3" fill="none"/></svg>
<span class="t" style="left:622.55px;top:98.70px;font-size:14.8px;line-height:18px;color:#333333;letter-spacing:0.144px;">Переносити текст</span>
<svg style="left:600px;top:135px;" width="18" height="20" viewBox="0 0 18 20"><rect x="1.5" y="2.5" width="15" height="15" fill="#fff" stroke="#777"/><path d="M11 10h4M13 8l2 2l-2 2" stroke="#3c6eb4" fill="none"/></svg>
<span class="t" style="left:622.25px;top:137.90px;font-size:14.8px;line-height:18px;color:#333333;letter-spacing:0.088px;">Об'єднати та розташувати в центрі</span>
<svg style="left:880px;top:144px;" width="8" height="6" viewBox="0 0 8 6"><path d="M1 1L4.0 4L7 1" stroke="#444" stroke-width="1.2" fill="none"/></svg>
<span class="t" style="left:604.55px;top:176.60px;font-size:12.5px;line-height:16px;color:#333333;letter-spacing:0.583px;">Вирівнювання</span>
<svg style="left:889px;top:180px;" width="10" height="9" viewBox="0 0 10 9"><path d="M0.5 8V0.5H9" stroke="#666" stroke-width="1" fill="none"/><path d="M3 3L8.5 8M8.5 3.8V8H4.3" stroke="#666" stroke-width="1.1" fill="none"/></svg>
<div style="left:903px;top:86px;width:1px;height:103px;background:#d0d0d0;"></div>
<div style="left:914px;top:93px;width:175px;height:29px;background:#fff;border:1px solid #ababab;"></div>
<span class="t" style="left:917.25px;top:98.80px;font-size:14.8px;line-height:18px;color:#333333;letter-spacing:0.142px;">Текстовий</span>
<svg style="left:1075px;top:105px;" width="8" height="5" viewBox="0 0 8 5"><path d="M0.3 0.5h7l-3.5 4z" fill="#555"/></svg>
<svg style="left:918px;top:137px;" width="21" height="19" viewBox="0 0 21 19"><rect x="0.2" y="0.2" width="19" height="10.6" fill="#3b78c3"/><ellipse cx="9.7" cy="5.5" rx="6.3" ry="3.6" fill="#fff"/><ellipse cx="9.7" cy="5.5" rx="2.3" ry="2.1" fill="#3b78c3"/><rect x="2" y="4.3" width="2" height="2.2" fill="#3b78c3"/><rect x="15.4" y="4.3" width="2" height="2.2" fill="#3b78c3"/><g fill="#eac282" stroke="#f3f3f3" stroke-width="0.7"><ellipse cx="16.2" cy="15.2" rx="3.6" ry="1.5"/><ellipse cx="16.2" cy="13.0" rx="3.6" ry="1.5"/><ellipse cx="16.2" cy="10.8" rx="3.6" ry="1.5"/><ellipse cx="16.2" cy="8.6" rx="3.6" ry="1.5"/><ellipse cx="9.9" cy="17.0" rx="3.6" ry="1.5"/><ellipse cx="9.9" cy="14.8" rx="3.6" ry="1.5"/><ellipse cx="9.9" cy="12.6" rx="3.6" ry="1.5"/></g></svg>
<svg style="left:947px;top:144px;" width="8.3" height="6.2" viewBox="0 0 8.3 6.2"><path d="M1 1L4.15 4.2L7.3 1" stroke="#444" stroke-width="1.2" fill="none"/></svg>
<span class="t" style="left:968.25px;top:134.60px;font-size:19px;line-height:24px;color:#505050;letter-spacing:0.594px;">%</span>
<span class="t" style="left:997.25px;top:139.70px;font-size:10.4px;line-height:13px;color:#444;letter-spacing:0.585px;">000</span>
<div style="left:1025px;top:133px;width:1px;height:26px;background:#d0d0d0;"></div>
<svg style="left:1035px;top:137px;" width="12" height="11" viewBox="0 0 12 11"><path d="M1.8 5.2H8.6M4.8 2.2L1.8 5.2L4.8 8.2" stroke="#3b78c3" stroke-width="1.8" fill="none"/></svg>
<span class="t" style="left:1043.25px;top:135.20px;font-size:9.6px;line-height:12px;color:#444;letter-spacing:0.542px;">,0</span>
<span class="t" style="left:1037.75px;top:144.60px;font-size:9.6px;line-height:12px;color:#444;letter-spacing:0.452px;">,00</span>
<svg style="left:1065px;top:146px;" width="12" height="11" viewBox="0 0 12 11"><path d="M1.2 5.2H8M5 2.2L8 5.2L5 8.2" stroke="#3b78c3" stroke-width="1.8" fill="none"/></svg>
<span class="t" style="left:1067.55px;top:135.20px;font-size:9.6px;line-height:12px;color:#444;letter-spacing:0.452px;">,00</span>
<span class="t" style="left:1073.05px;top:144.60px;font-size:9.6px;line-height:12px;color:#444;letter-spacing:0.542px;">,0</span>
<span class="t" style="left:970.75px;top:176.60px;font-size:12.5px;line-height:16px;color:#333333;letter-spacing:0.309px;">Число</span>
<svg style="left:1084px;top:180px;" width="10" height="9" viewBox="0 0 10 9"><path d="M0.5 8V0.5H9" stroke="#666" stroke-width="1" fill="none"/><path d="M3 3L8.5 8M8.5 3.8V8H4.3" stroke="#666" stroke-width="1.1" fill="none"/></svg>
<div style="left:1097px;top:86px;width:1px;height:103px;background:#d0d0d0;"></div>
<svg style="left:1151px;top:93px;" width="38" height="35" viewBox="0 0 38 35"><g><rect x="0.5" y="0.5" width="33" height="27" fill="#fff" stroke="#b5b5b5"/><path d="M0.5 7.25H33.5" stroke="#b5b5b5"/><path d="M0.5 14.0H33.5" stroke="#b5b5b5"/><path d="M0.5 20.75H33.5" stroke="#b5b5b5"/><path d="M11.5 0.5V27.5M22.5 0.5V27.5" stroke="#b5b5b5"/><rect x="11.5" y="0.5" width="6" height="6.75" fill="#d9603b"/><rect x="11.5" y="7.25" width="10" height="6.75" fill="#3b78c3"/><rect x="11.5" y="14" width="8" height="6.75" fill="#d9603b"/><rect x="11.5" y="20.75" width="5" height="6.75" fill="#3b78c3"/><rect x="18.5" y="19.5" width="18" height="14" fill="#fff" stroke="#6a6a6a"/></g></svg>
<span class="t" style="left:1172.60px;top:108.60px;font-size:17.5px;line-height:22px;color:#333;">≠</span>
<span class="t" style="left:1140.75px;top:130.80px;font-size:14.8px;line-height:18px;color:#333333;letter-spacing:0.599px;">Умовне</span>
<span class="t" style="left:1109.75px;top:151.00px;font-size:14.8px;line-height:18px;color:#333333;letter-spacing:0.013px;">форматування</span>
<div style="left:274px;top:6px;width:340px;height:532px;background:#fff;border:1px solid #b9b9b9;box-shadow:1px 2px 5px rgba(0,0,0,0.2);"></div>
<div style="left:275px;top:524px;width:338px;height:1px;background:#e2e2e2;"></div>
<div style="left:275px;top:525px;width:338px;height:12px;background:linear-gradient(#fff 0%,#fbfbfb 40%,#e6e6e6 100%);"></div>
<div style="left:607px;top:527px;width:2px;height:2px;background:#b0b0b0;"></div>
<div style="left:602px;top:532px;width:2px;height:2px;background:#b0b0b0;"></div>
<div style="left:607px;top:532px;width:2px;height:2px;background:#b0b0b0;"></div>
<div style="left:277px;top:9px;width:25px;height:25px;background:#c6c6c6;border:1px solid #a0a0a0;"></div>
<span class="t" style="left:280.80px;top:8.80px;font-size:10.8px;line-height:14px;color:#3f72b8;font-weight:700;">А</span>
<span class="t" style="left:280.80px;top:18.60px;font-size:10.8px;line-height:14px;color:#9350a8;font-weight:700;">Я</span>
<svg style="left:290px;top:12px;" width="9" height="20" viewBox="0 0 9 20"><path d="M4.5 0V18M1.2000000000000002 15.0L4.5 18.3L7.8 15.0" stroke="#5a5a5a" stroke-width="1.1" fill="none"/></svg>
<span class="t" style="left:280.30px;top:38.80px;font-size:10.8px;line-height:14px;color:#9350a8;font-weight:700;">Я</span>
<span class="t" style="left:280.30px;top:48.60px;font-size:10.8px;line-height:14px;color:#3f72b8;font-weight:700;">А</span>
<svg style="left:289.5px;top:42px;" width="9" height="20" viewBox="0 0 9 20"><path d="M4.5 0V18M1.9 15.700000000000001L4.5 18.3L7.1 15.700000000000001" stroke="#5a5a5a" stroke-width="1.1" fill="none"/></svg>
<span class="t" style="left:313.75px;top:14.00px;font-size:14.8px;line-height:18px;color:#4d4d4d;letter-spacing:0.019px;">Сортування від А до Я</span>
<span class="t" style="left:313.75px;top:44.00px;font-size:14.8px;line-height:18px;color:#4d4d4d;letter-spacing:0.019px;">Сортування від Я до А</span>
<span class="t" style="left:313.75px;top:74.00px;font-size:14.8px;line-height:18px;color:#4d4d4d;letter-spacing:0.276px;">Сортування за кольором</span>
<svg style="left:596px;top:78px;" width="6" height="10" viewBox="0 0 6 10"><path d="M0.5 0.5L5 5L0.5 9.5z" fill="#4d4d4d"/></svg>
<div style="left:314px;top:97px;width:299px;height:1px;background:#e1e1e1;"></div>
<span class="t" style="left:313.75px;top:107.00px;font-size:14.8px;line-height:18px;color:#b4b4b4;letter-spacing:0.288px;">Подання аркуша</span>
<svg style="left:596px;top:111px;" width="6" height="10" viewBox="0 0 6 10"><path d="M0.5 0.5L5 5L0.5 9.5z" fill="#b4b4b4"/></svg>
<div style="left:314px;top:130px;width:299px;height:1px;background:#e1e1e1;"></div>
<span class="t" style="left:313.75px;top:139.80px;font-size:14.8px;line-height:18px;color:#b4b4b4;letter-spacing:0.024px;">Видалити фільтр із "Nationality and R..."</span>
<span class="t" style="left:313.75px;top:169.80px;font-size:14.8px;line-height:18px;color:#b4b4b4;letter-spacing:0.344px;">Фільтрування за кольором</span>
<svg style="left:596px;top:174px;" width="6" height="10" viewBox="0 0 6 10"><path d="M0.5 0.5L5 5L0.5 9.5z" fill="#b4b4b4"/></svg>
<span class="t" style="left:313.75px;top:199.60px;font-size:14.8px;line-height:18px;color:#4d4d4d;letter-spacing:0.125px;">Текстові фільтри</span>
<svg style="left:596px;top:204px;" width="6" height="10" viewBox="0 0 6 10"><path d="M0.5 0.5L5 5L0.5 9.5z" fill="#4d4d4d"/></svg>
<div style="left:314px;top:223px;width:299px;height:1px;background:#e1e1e1;"></div>
<div style="left:314.5px;top:29px;width:9.5px;height:1px;background:#4d4d4d;"></div>
<div style="left:341px;top:59px;width:8.5px;height:1px;background:#4d4d4d;"></div>
<div style="left:341px;top:89px;width:8.5px;height:1px;background:#4d4d4d;"></div>
<div style="left:380.5px;top:122px;width:7.5px;height:1px;background:#b4b4b4;"></div>
<div style="left:314.5px;top:154.8px;width:8.5px;height:1px;background:#b4b4b4;"></div>
<div style="left:325px;top:184.8px;width:3.5px;height:1px;background:#b4b4b4;"></div>
<div style="left:314.5px;top:214.6px;width:7.5px;height:1px;background:#4d4d4d;"></div>
<svg style="left:279px;top:138px;" width="23" height="20" viewBox="0 0 23 20"><path d="M1.5 1.5H13.5L9 7V13L6.5 11.8V7z" fill="#b9b9b9" stroke="#b9b9b9" stroke-width="1"/><path d="M11.5 10.5L20 18M20 10.5L11.5 18" stroke="#b9b9b9" stroke-width="2"/></svg>
<div style="left:311px;top:231px;width:295px;height:24px;background:#fff;border:1px solid #ababab;"></div>
<span class="t" style="left:313.05px;top:233.00px;font-size:15.4px;line-height:19px;color:#000;letter-spacing:0.276px;">ctc</span>
<div style="left:584px;top:231px;width:22px;height:24px;background:linear-gradient(#f0f0f0,#dedede);border:1px solid #ababab;"></div>
<svg style="left:589px;top:237px;" width="12" height="12" viewBox="0 0 12 12"><path d="M1.2 1.2L10.8 10.8M10.8 1.2L1.2 10.8" stroke="#4f4f4f" stroke-width="2.4" fill="none"/></svg>
<div style="left:311px;top:259px;width:295px;height:211px;background:#fff;border:1px solid #e3e3e3;"></div>
<span class="t" style="left:402.98px;top:282.50px;font-size:12.3px;line-height:15px;color:#5c5c5c;letter-spacing:0.452px;">Збіги не знайдено</span>
<div style="left:420px;top:490px;width:86px;height:28px;background:#e1e1e1;border:1px solid #bcbcbc;"></div>
<span class="t" style="left:453.75px;top:496.50px;font-size:12.8px;line-height:16px;color:#a0a0a0;">OK</span>
<div style="left:519px;top:490px;width:86px;height:28px;background:#e1e1e1;border:1px solid #adadad;"></div>
<span class="t" style="left:531.99px;top:497.00px;font-size:12.5px;line-height:16px;color:#1e1e1e;letter-spacing:-0.012px;">Скасувати</span>
</div></body></html>
